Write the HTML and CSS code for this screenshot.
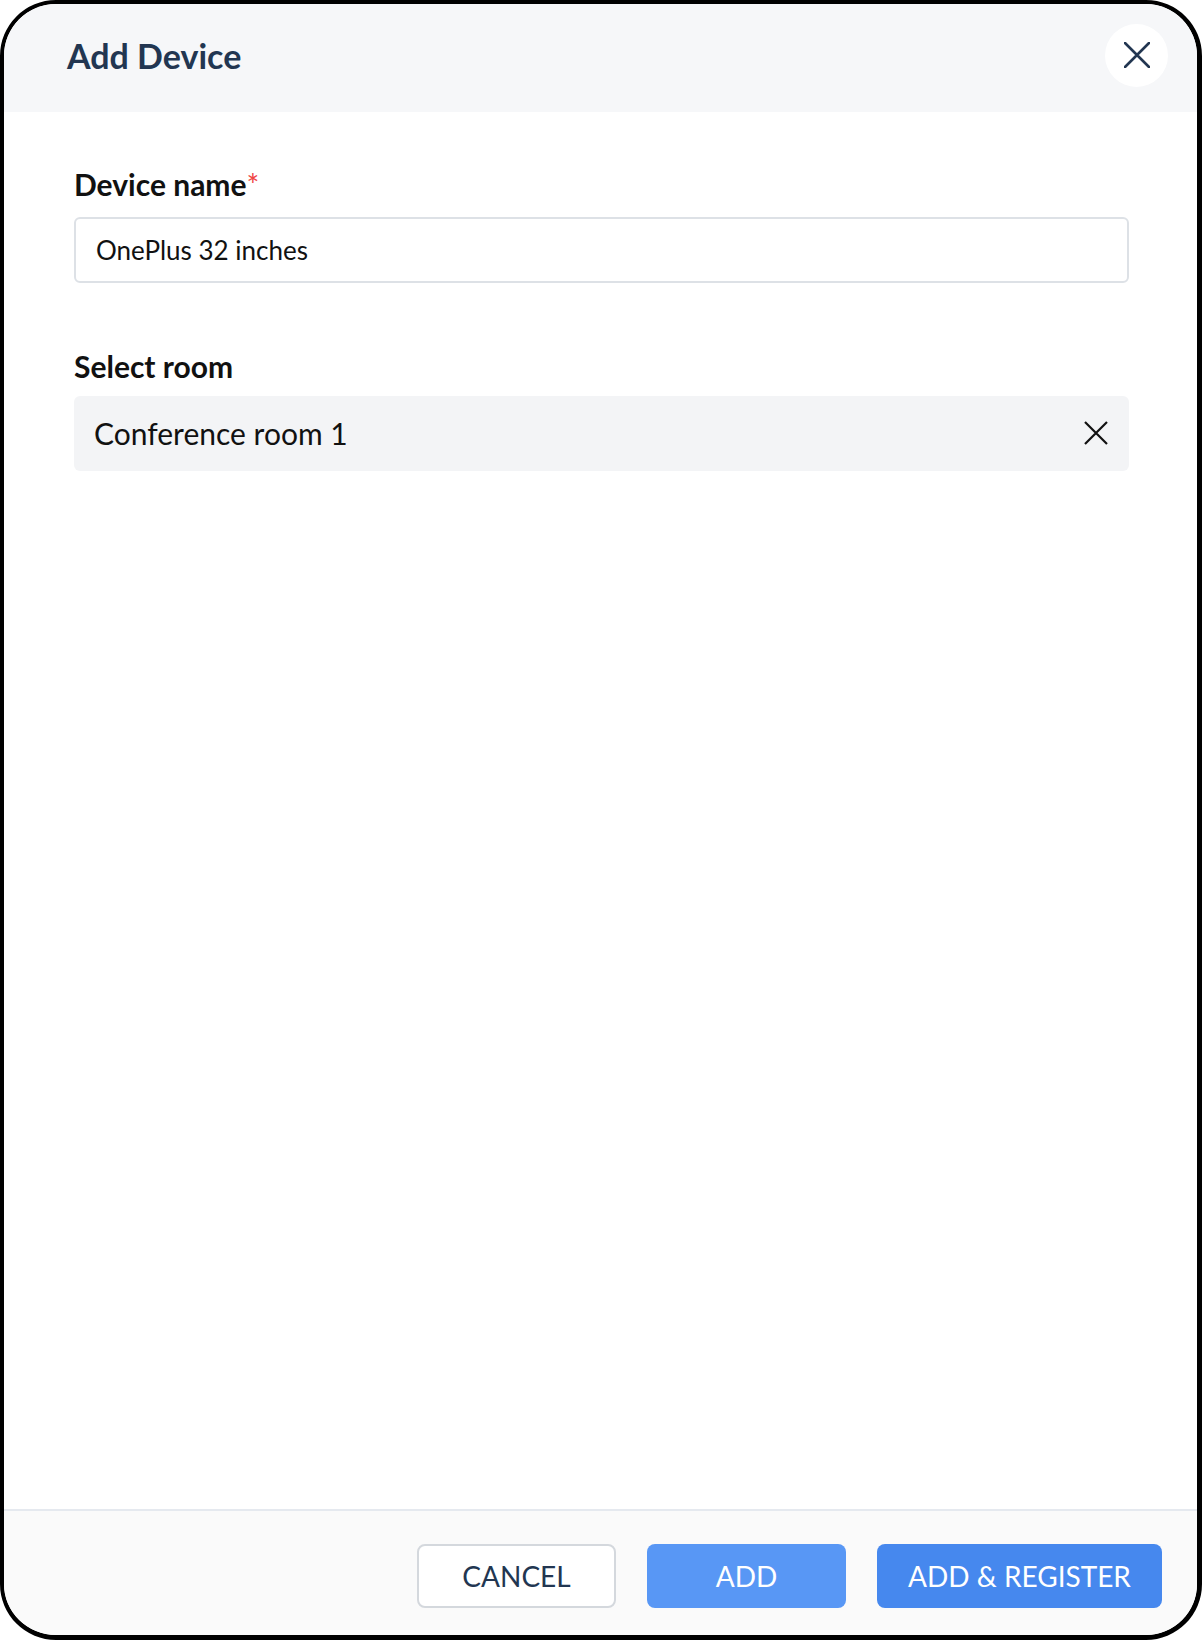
FILE: index.html
```html
<!DOCTYPE html>
<html lang="en">
<head>
  <meta charset="UTF-8" />
  <meta name="viewport" content="width=device-width, initial-scale=1.0"/>
  <title>Add Device</title>
  <link rel="stylesheet" href="styles.css">
</head>
<body>
  <div class="dialog">
    <div class="dialog-header">
      <h1 class="dialog-title">Add Device</h1>
      <button class="close-btn" aria-label="Close">
        <svg width="26" height="26" viewBox="0 0 26 26"><path d="M1 1L25 25M25 1L1 25" stroke="#223651" stroke-width="2.6" fill="none" stroke-linecap="round"/></svg>
      </button>
    </div>

    <div class="dialog-body">
      <label class="field-label first">Device name<span class="req">*</span></label>
      <input class="text-input" type="text" value="OnePlus 32 inches">

      <label class="field-label second">Select room</label>
      <div class="select-box">
        <span class="select-value">Conference room 1</span>
        <svg class="select-clear" width="24" height="24" viewBox="0 0 24 24"><path d="M1 1L23 23M23 1L1 23" stroke="#111" stroke-width="2.2" fill="none"/></svg>
      </div>
    </div>

    <div class="dialog-footer">
      <button class="btn btn-cancel">CANCEL</button>
      <button class="btn btn-add">ADD</button>
      <button class="btn btn-register">ADD &amp; REGISTER</button>
    </div>
  </div>
</body>
</html>
```

FILE: styles.css
```css
* { box-sizing: border-box; }
html, body { margin: 0; background: #fff; }
body { font-family: Lato, "Open Sans", sans-serif; color: #111; }

.dialog {
  width: 1202px;
  height: 1640px;
  border: 4px solid #000;
  border-right-width: 5px;
  border-bottom-width: 5px;
  border-radius: 56px;
  overflow: hidden;
  display: flex;
  flex-direction: column;
  background: #fff;
}

.dialog-header {
  height: 108px;
  background: #f6f7f9;
  display: flex;
  align-items: center;
  justify-content: space-between;
  padding: 0 29px 6px 63px;
}
.dialog-title {
  margin: 0;
  font-size: 34px;
  font-weight: 700;
  color: #223651;
}
.close-btn {
  width: 63px;
  height: 63px;
  border-radius: 50%;
  border: none;
  background: #fff;
  display: flex;
  align-items: center;
  justify-content: center;
  padding: 0;
}

.dialog-body {
  flex: 1;
  padding: 54px 68px 0 70px;
  display: flex;
  flex-direction: column;
}
.field-label {
  font-size: 30px;
  font-weight: 700;
  line-height: 36px;
  color: #111;
}
.field-label.second { margin-top: 65px; }
.req { color: #ef4444; font-weight: 400; font-size: 30px; }

.text-input {
  margin-top: 15px;
  height: 66px;
  border: 2px solid #dde1e6;
  border-radius: 6px;
  padding: 0 20px;
  font-family: inherit;
  font-size: 26px;
  color: #111;
  background: #fff;
}

.select-box {
  margin-top: 12px;
  height: 75px;
  background: #f3f4f6;
  border-radius: 6px;
  display: flex;
  align-items: center;
  justify-content: space-between;
  padding: 0 21px 2px 20px;
}
.select-value { font-size: 30px; color: #111; }

.dialog-footer {
  height: 126px;
  border-top: 2px solid #e5e9ef;
  background: #fafafa;
  display: flex;
  justify-content: flex-end;
  align-items: flex-start;
  gap: 31px;
  padding: 33px 35px 0 0;
}
.btn {
  height: 64px;
  border-radius: 8px;
  font-family: inherit;
  font-size: 28px;
  font-weight: 400;
  border: none;
}
.btn-cancel {
  width: 199px;
  background: #fff;
  border: 2px solid #d4d8dd;
  color: #223651;
}
.btn-add { width: 199px; background: #5897f5; color: #fff; }
.btn-register { width: 285px; background: #4688ee; color: #fff; }
```
